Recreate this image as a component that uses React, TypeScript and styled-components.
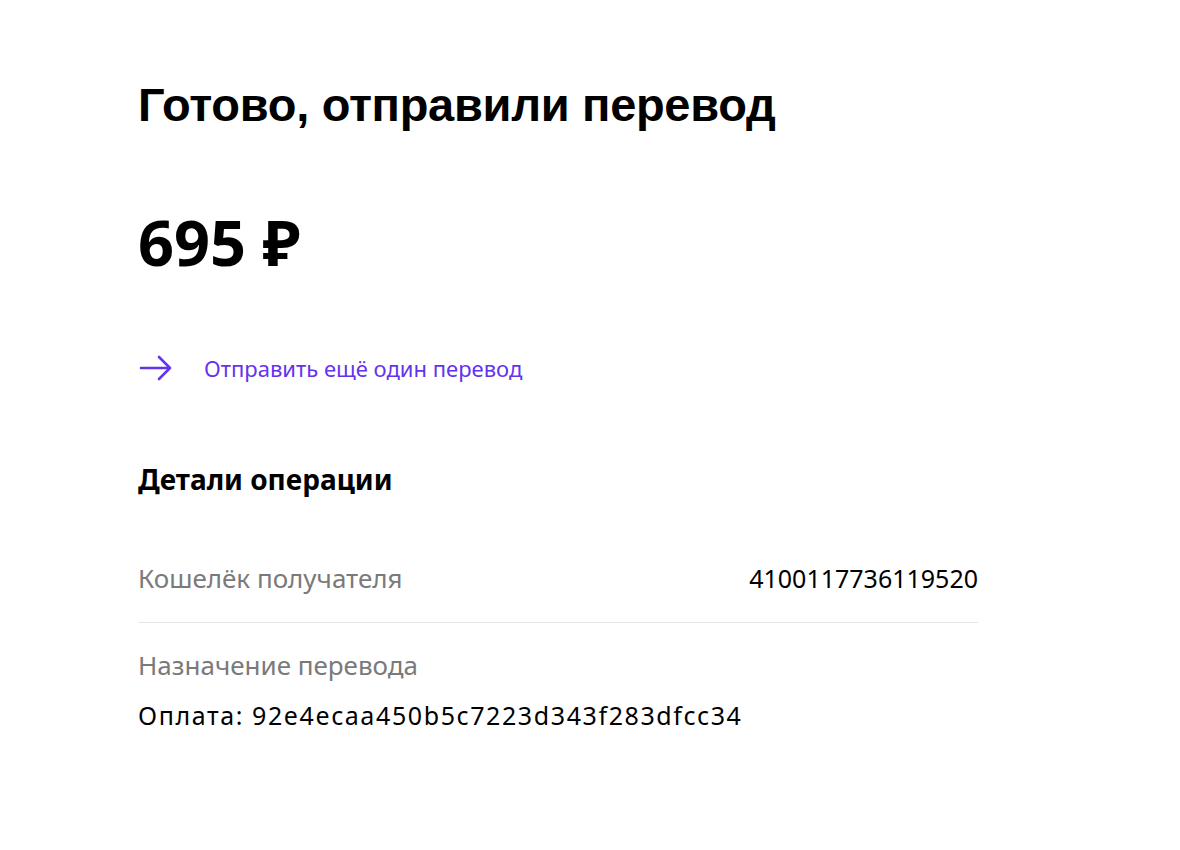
import styled, { createGlobalStyle } from "styled-components";

const GlobalStyle = createGlobalStyle`
  body {
    margin: 0;
    background: #fff;
    color: #000;
    font-family: "Noto Sans", Arial, sans-serif;
  }
`;

export default function App(): JSX.Element {
  return (
    <>
      <GlobalStyle />
      <Page>
        <Title>Готово, отправили перевод</Title>
        <Amount>695 ₽</Amount>
        <RepeatLink href="#">
          <ArrowIcon />
          <span>Отправить ещё один перевод</span>
        </RepeatLink>
        <SectionTitle>Детали операции</SectionTitle>
        <DetailRow>
          <Label>Кошелёк получателя</Label>
          <Value>4100117736119520</Value>
        </DetailRow>
        <Divider />
        <DetailBlock>
          <Label>Назначение перевода</Label>
          <Value $wide>Оплата: 92e4ecaa450b5c7223d343f283dfcc34</Value>
        </DetailBlock>
      </Page>
    </>
  );
}

function ArrowIcon(): JSX.Element {
  return (
    <svg width="34" height="28" viewBox="0 0 34 28" fill="none">
      <path
        d="M3 14h29M21 3l11 11-11 11"
        stroke="#6433f0"
        strokeWidth="2.6"
        strokeLinecap="round"
        strokeLinejoin="round"
      />
    </svg>
  );
}

const Page = styled.main`
  width: 840px;
  padding: 76px 0 80px 138px;
  display: flex;
  flex-direction: column;
`;

const Title = styled.h1`
  margin: 0;
  font-family: "Liberation Sans", Arial, sans-serif;
  font-weight: 700;
  font-size: 47px;
  line-height: 58px;
  letter-spacing: -0.3px;
`;

const Amount = styled.div`
  margin-top: 68px;
  font-size: 63px;
  font-weight: 700;
  line-height: 80px;
`;

const RepeatLink = styled.a`
  margin-top: 72px;
  display: flex;
  align-items: center;
  gap: 32px;
  color: #6433f0;
  text-decoration: none;
  font-size: 22px;
  line-height: 28px;
`;

const SectionTitle = styled.h2`
  margin: 80px 0 0;
  font-size: 28px;
  font-weight: 700;
  line-height: 34px;
`;

const DetailRow = styled.div`
  margin-top: 66px;
  display: flex;
  justify-content: space-between;
  align-items: baseline;
  padding-bottom: 28px;
`;

const Divider = styled.hr`
  margin: 0;
  border: none;
  border-top: 1px solid #e6e6e6;
`;

const DetailBlock = styled.div`
  margin-top: 26px;
  display: flex;
  flex-direction: column;
  gap: 18px;
`;

const Label = styled.span`
  color: #7a7a7a;
  font-size: 26px;
  line-height: 32px;
`;

const Value = styled.span<{ $wide?: boolean }>`
  color: #000;
  font-size: 25px;
  line-height: 32px;
  letter-spacing: ${(p) => (p.$wide ? "1.6px" : "0")};
`;
